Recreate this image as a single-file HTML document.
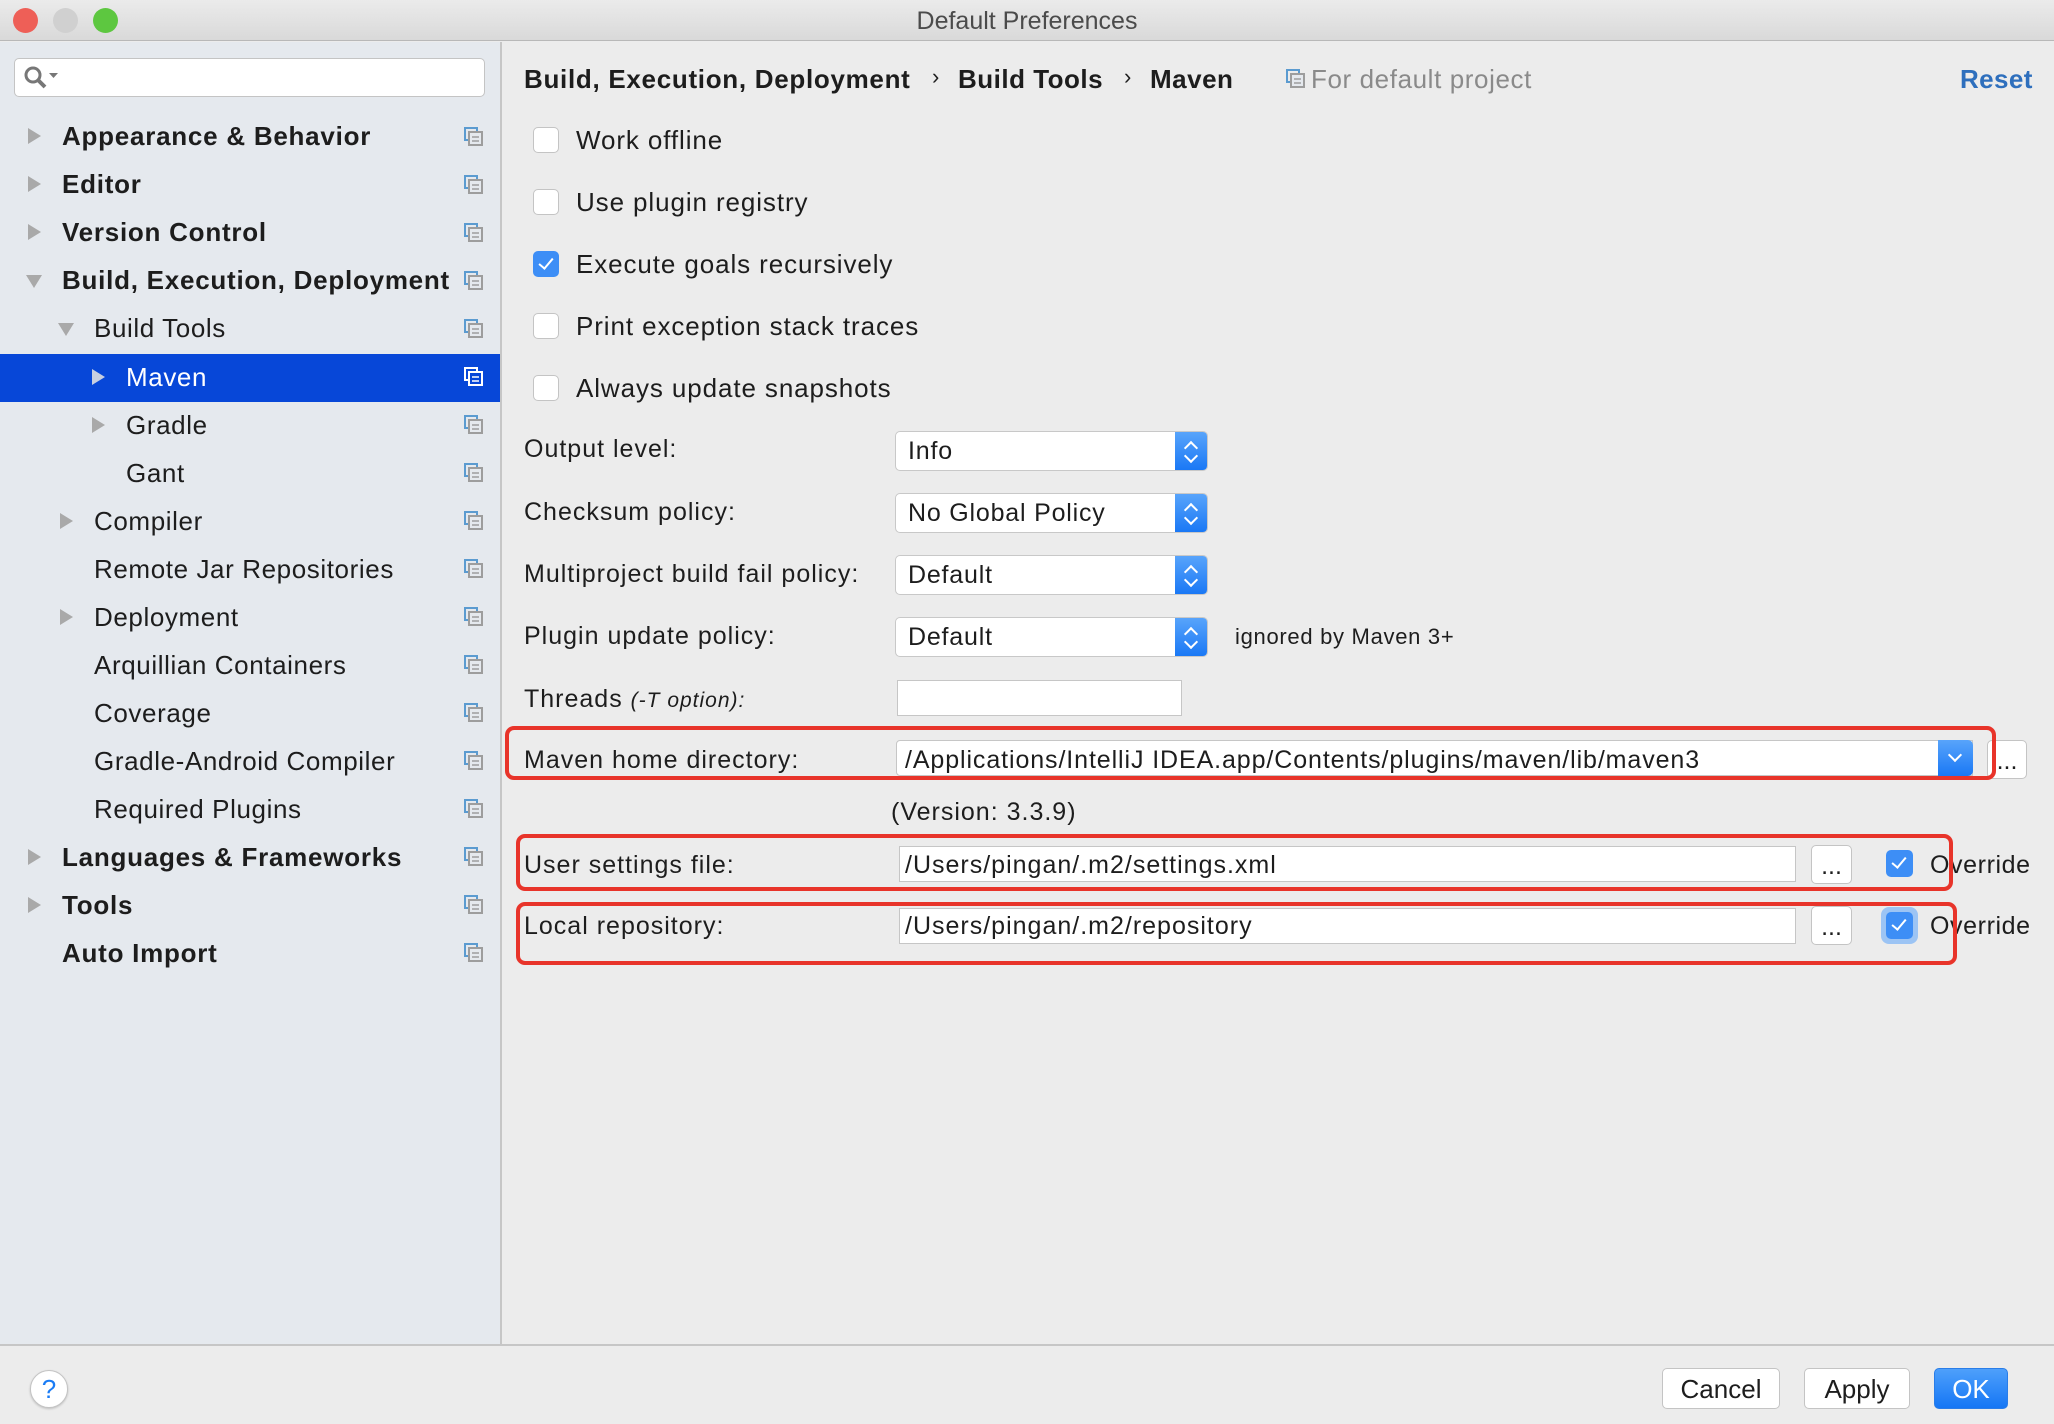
<!DOCTYPE html>
<html><head><meta charset="utf-8"><style>
*{box-sizing:border-box;margin:0;padding:0}
body{width:2054px;height:1424px;position:relative;overflow:hidden;background:#ececec;font-family:"Liberation Sans",sans-serif;color:#1d1d1d}
.a{position:absolute;white-space:nowrap}
.t{font-size:24px;line-height:30px}
.b{font-weight:bold}
.l{letter-spacing:1px}
.s{letter-spacing:0.8px}
.cb{position:absolute;width:26px;height:26px;background:#fff;border:1px solid #c4c4c4;border-radius:5px}
.cbon{position:absolute;width:26px;height:26px;background:#3d8ef6;border-radius:5px}
.cbon:after{content:"";position:absolute;left:9px;top:4px;width:6px;height:12px;border-right:2.5px solid #fff;border-bottom:2.5px solid #fff;transform:rotate(40deg)}
.combo{position:absolute;left:895px;width:313px;height:40px;background:#fff;border:1px solid #c8c8c8;border-radius:5px;overflow:hidden}
.combo span{position:absolute;left:12px;top:4px;font-size:25px;line-height:30px;letter-spacing:0.8px}
.combo i{position:absolute;right:0;top:0;width:32px;height:100%;background:linear-gradient(#58a4fb,#1a78f5)}
.combo i:before,.combo i:after{content:"";position:absolute;left:11px;width:8px;height:8px;border-left:2px solid #fff;border-top:2px solid #fff}
.combo i:before{top:11px;transform:rotate(45deg)}
.combo i:after{top:19px;transform:rotate(225deg)}
.fld{position:absolute;background:#fff;border:1px solid #c6c6c6}
.btn{position:absolute;background:#fff;border:1px solid #c4c4c4;border-radius:5px;text-align:center;font-size:25px}
.red{position:absolute;border:4px solid #e8342a;border-radius:9px}
.arr{position:absolute;width:0;height:0;border-top:8px solid transparent;border-bottom:8px solid transparent;border-left:13px solid #a9a9a9}
.arrd{position:absolute;width:0;height:0;border-left:8px solid transparent;border-right:8px solid transparent;border-top:13px solid #a9a9a9}
.cp{position:absolute;left:464px;width:19px;height:19px}
.sb{font-size:26px;letter-spacing:0.75px}
.sr{font-size:26px;letter-spacing:0.6px}
</style></head><body>
<div class="a" style="left:0;top:0;width:2054px;height:41px;background:linear-gradient(#ebebeb,#d9d9d9);border-bottom:1px solid #b8b8b8"></div>
<div class="a" style="left:13px;top:8px;width:25px;height:25px;border-radius:50%;background:#ee5f57"></div>
<div class="a" style="left:53px;top:8px;width:25px;height:25px;border-radius:50%;background:#d0d0d0"></div>
<div class="a" style="left:93px;top:8px;width:25px;height:25px;border-radius:50%;background:#5dc740"></div>
<div class="a" style="left:0;width:2054px;top:6px;text-align:center;font-size:25px;color:#4b4b4b;line-height:30px">Default Preferences</div>
<div class="a" style="left:0;top:42px;width:502px;height:1302px;background:#e5e9ee;border-right:2px solid #c6c6c6"></div>
<div class="a" style="left:14px;top:58px;width:471px;height:39px;background:#fff;border:1px solid #c4c4c4;border-radius:5px"></div>
<svg class="a" style="left:22px;top:64px" width="40" height="28"><circle cx="11" cy="11" r="7" fill="none" stroke="#777" stroke-width="3"/><path d="M16 16l7 7" stroke="#777" stroke-width="4"/><path d="M27 9h9l-4.5 5z" fill="#777"/></svg>
<div class="a" style="left:0;top:354px;width:500px;height:48px;background:#0747d8"></div>

<div class="arr" style="left:28px;top:128px"></div><div class="a t b sb" style="left:62px;top:121px">Appearance &amp; Behavior</div>
<div class="arr" style="left:28px;top:176px"></div><div class="a t b sb" style="left:62px;top:169px">Editor</div>
<div class="arr" style="left:28px;top:224px"></div><div class="a t b sb" style="left:62px;top:217px">Version Control</div>
<div class="arrd" style="left:26px;top:275px"></div><div class="a t b sb" style="left:62px;top:265px">Build, Execution, Deployment</div>
<div class="arrd" style="left:58px;top:323px"></div><div class="a t sr" style="left:94px;top:313px">Build Tools</div>
<div class="arr" style="left:92px;top:369px;border-left-color:#c7cfe0"></div><div class="a t sr" style="left:126px;top:362px;color:#fff">Maven</div>
<div class="arr" style="left:92px;top:417px"></div><div class="a t sr" style="left:126px;top:410px">Gradle</div>
<div class="a t sr" style="left:126px;top:458px">Gant</div>
<div class="arr" style="left:60px;top:513px"></div><div class="a t sr" style="left:94px;top:506px">Compiler</div>
<div class="a t sr" style="left:94px;top:554px">Remote Jar Repositories</div>
<div class="arr" style="left:60px;top:609px"></div><div class="a t sr" style="left:94px;top:602px">Deployment</div>
<div class="a t sr" style="left:94px;top:650px">Arquillian Containers</div>
<div class="a t sr" style="left:94px;top:698px">Coverage</div>
<div class="a t sr" style="left:94px;top:746px">Gradle-Android Compiler</div>
<div class="a t sr" style="left:94px;top:794px">Required Plugins</div>
<div class="arr" style="left:28px;top:849px"></div><div class="a t b sb" style="left:62px;top:842px">Languages &amp; Frameworks</div>
<div class="arr" style="left:28px;top:897px"></div><div class="a t b sb" style="left:62px;top:890px">Tools</div>
<div class="a t b sb" style="left:62px;top:938px">Auto Import</div>

<svg width="0" height="0" style="position:absolute"><defs><g id="cpi"><rect x="1" y="1" width="12" height="12" fill="none" stroke="#5b9bd0" stroke-width="2"/><rect x="5" y="5" width="13" height="13" fill="#e5e9ee" stroke="#9d9d9d" stroke-width="2"/><path d="M8 10h7M8 14h7" stroke="#9d9d9d" stroke-width="1.6"/></g><g id="cpw"><rect x="1" y="1" width="12" height="12" fill="none" stroke="#fff" stroke-width="2"/><rect x="5" y="5" width="13" height="13" fill="#0747d8" stroke="#fff" stroke-width="2"/><path d="M8 10h7M8 14h7" stroke="#fff" stroke-width="1.6"/></g></defs></svg>
<svg class="cp" style="top:127px"><use href="#cpi"/></svg>
<svg class="cp" style="top:175px"><use href="#cpi"/></svg>
<svg class="cp" style="top:223px"><use href="#cpi"/></svg>
<svg class="cp" style="top:271px"><use href="#cpi"/></svg>
<svg class="cp" style="top:319px"><use href="#cpi"/></svg>
<svg class="cp" style="top:367px"><use href="#cpw"/></svg>
<svg class="cp" style="top:415px"><use href="#cpi"/></svg>
<svg class="cp" style="top:463px"><use href="#cpi"/></svg>
<svg class="cp" style="top:511px"><use href="#cpi"/></svg>
<svg class="cp" style="top:559px"><use href="#cpi"/></svg>
<svg class="cp" style="top:607px"><use href="#cpi"/></svg>
<svg class="cp" style="top:655px"><use href="#cpi"/></svg>
<svg class="cp" style="top:703px"><use href="#cpi"/></svg>
<svg class="cp" style="top:751px"><use href="#cpi"/></svg>
<svg class="cp" style="top:799px"><use href="#cpi"/></svg>
<svg class="cp" style="top:847px"><use href="#cpi"/></svg>
<svg class="cp" style="top:895px"><use href="#cpi"/></svg>
<svg class="cp" style="top:943px"><use href="#cpi"/></svg>

<div class="a t b" style="left:524px;top:64px;font-size:26px;letter-spacing:0.7px">Build, Execution, Deployment</div>
<div class="a t" style="left:932px;top:62px;font-size:22px">›</div>
<div class="a t b" style="left:958px;top:64px;font-size:26px;letter-spacing:0.5px">Build Tools</div>
<div class="a t" style="left:1124px;top:62px;font-size:22px">›</div>
<div class="a t b" style="left:1150px;top:64px;font-size:26px;letter-spacing:0.5px">Maven</div>
<svg class="a" style="left:1286px;top:69px" width="19" height="19"><use href="#cpi"/></svg>
<div class="a t" style="left:1311px;top:64px;font-size:26px;color:#8a8a8a;letter-spacing:0.6px">For default project</div>
<div class="a t b" style="left:1960px;top:64px;font-size:26px;color:#2e6fbd;letter-spacing:0.4px">Reset</div>

<div class="cb" style="left:533px;top:127px"></div><div class="a t sr" style="left:576px;top:125px;letter-spacing:0.9px">Work offline</div>
<div class="cb" style="left:533px;top:189px"></div><div class="a t sr" style="left:576px;top:187px;letter-spacing:0.9px">Use plugin registry</div>
<div class="cbon" style="left:533px;top:251px"></div><div class="a t sr" style="left:576px;top:249px;letter-spacing:0.9px">Execute goals recursively</div>
<div class="cb" style="left:533px;top:313px"></div><div class="a t sr" style="left:576px;top:311px;letter-spacing:0.9px">Print exception stack traces</div>
<div class="cb" style="left:533px;top:375px"></div><div class="a t sr" style="left:576px;top:373px;letter-spacing:0.9px">Always update snapshots</div>

<div class="a t l" style="left:524px;top:434px;font-size:25px">Output level:</div>
<div class="combo" style="top:431px"><span>Info</span><i></i></div>
<div class="a t l" style="left:524px;top:497px;font-size:25px">Checksum policy:</div>
<div class="combo" style="top:493px"><span>No Global Policy</span><i></i></div>
<div class="a t l" style="left:524px;top:559px;font-size:25px">Multiproject build fail policy:</div>
<div class="combo" style="top:555px"><span>Default</span><i></i></div>
<div class="a t l" style="left:524px;top:621px;font-size:25px">Plugin update policy:</div>
<div class="combo" style="top:617px"><span>Default</span><i></i></div>
<div class="a t" style="left:1235px;top:622px;font-size:22px;letter-spacing:0.7px">ignored by Maven 3+</div>
<div class="a t l" style="left:524px;top:684px;font-size:25px">Threads <i style="font-size:21px">(-T option):</i></div>
<div class="fld" style="left:897px;top:680px;width:285px;height:36px"></div>

<div class="fld" style="left:896px;top:740px;width:1077px;height:36px;border-radius:4px 0 0 4px"></div>
<div class="a" style="left:1938px;top:740px;width:35px;height:36px;background:linear-gradient(#58a4fb,#1a78f5);border-radius:0 5px 5px 0"></div>
<div class="a" style="left:1950px;top:750px;width:10px;height:10px;border-right:2.5px solid #fff;border-bottom:2.5px solid #fff;transform:rotate(45deg)"></div>
<div class="a t" style="left:905px;top:745px;font-size:25px;letter-spacing:0.9px">/Applications/IntelliJ IDEA.app/Contents/plugins/maven/lib/maven3</div>
<div class="btn" style="left:1987px;top:740px;width:40px;height:39px;line-height:40px">...</div>
<div class="a t l" style="left:524px;top:745px;font-size:25px">Maven home directory:</div>
<div class="red" style="left:505px;top:726px;width:1491px;height:54px"></div>

<div class="a t l" style="left:891px;top:797px;font-size:25px">(Version: 3.3.9)</div>

<div class="fld" style="left:899px;top:846px;width:897px;height:36px"></div>
<div class="a t" style="left:905px;top:850px;font-size:25px;letter-spacing:1px">/Users/pingan/.m2/settings.xml</div>
<div class="btn" style="left:1811px;top:845px;width:41px;height:39px;line-height:40px">...</div>
<div class="cbon" style="left:1886px;top:850px;width:27px;height:27px"></div>
<div class="a t" style="left:1930px;top:850px;font-size:25px;letter-spacing:0.6px">Override</div>
<div class="a t l" style="left:524px;top:850px;font-size:25px">User settings file:</div>
<div class="red" style="left:516px;top:834px;width:1437px;height:57px"></div>

<div class="fld" style="left:899px;top:908px;width:897px;height:36px"></div>
<div class="a t" style="left:905px;top:911px;font-size:25px;letter-spacing:1px">/Users/pingan/.m2/repository</div>
<div class="btn" style="left:1811px;top:906px;width:41px;height:39px;line-height:40px">...</div>
<div class="a" style="left:1881px;top:907px;width:37px;height:37px;border-radius:8px;background:#9cc4f4"></div>
<div class="cbon" style="left:1886px;top:912px;width:27px;height:27px"></div>
<div class="a t" style="left:1930px;top:911px;font-size:25px;letter-spacing:0.6px">Override</div>
<div class="a t l" style="left:524px;top:911px;font-size:25px">Local repository:</div>
<div class="red" style="left:516px;top:902px;width:1441px;height:63px"></div>

<div class="a" style="left:0;top:1344px;width:2054px;height:80px;background:#ececec;border-top:2px solid #c6c6c6"></div>
<div class="a" style="left:30px;top:1370px;width:38px;height:38px;border-radius:50%;background:#fff;border:1px solid #c4c4c4;box-shadow:0 1px 2px rgba(0,0,0,.2);text-align:center;font-size:26px;line-height:36px;color:#1a7cf5">?</div>
<div class="btn" style="left:1662px;top:1368px;width:118px;height:41px;line-height:40px;font-size:26px">Cancel</div>
<div class="btn" style="left:1804px;top:1368px;width:106px;height:41px;line-height:40px;font-size:26px">Apply</div>
<div class="btn" style="left:1934px;top:1368px;width:74px;height:41px;line-height:40px;font-size:26px;background:linear-gradient(#4ea0fb,#1576f5);border-color:#2a7de8;color:#fff">OK</div>
</body></html>
